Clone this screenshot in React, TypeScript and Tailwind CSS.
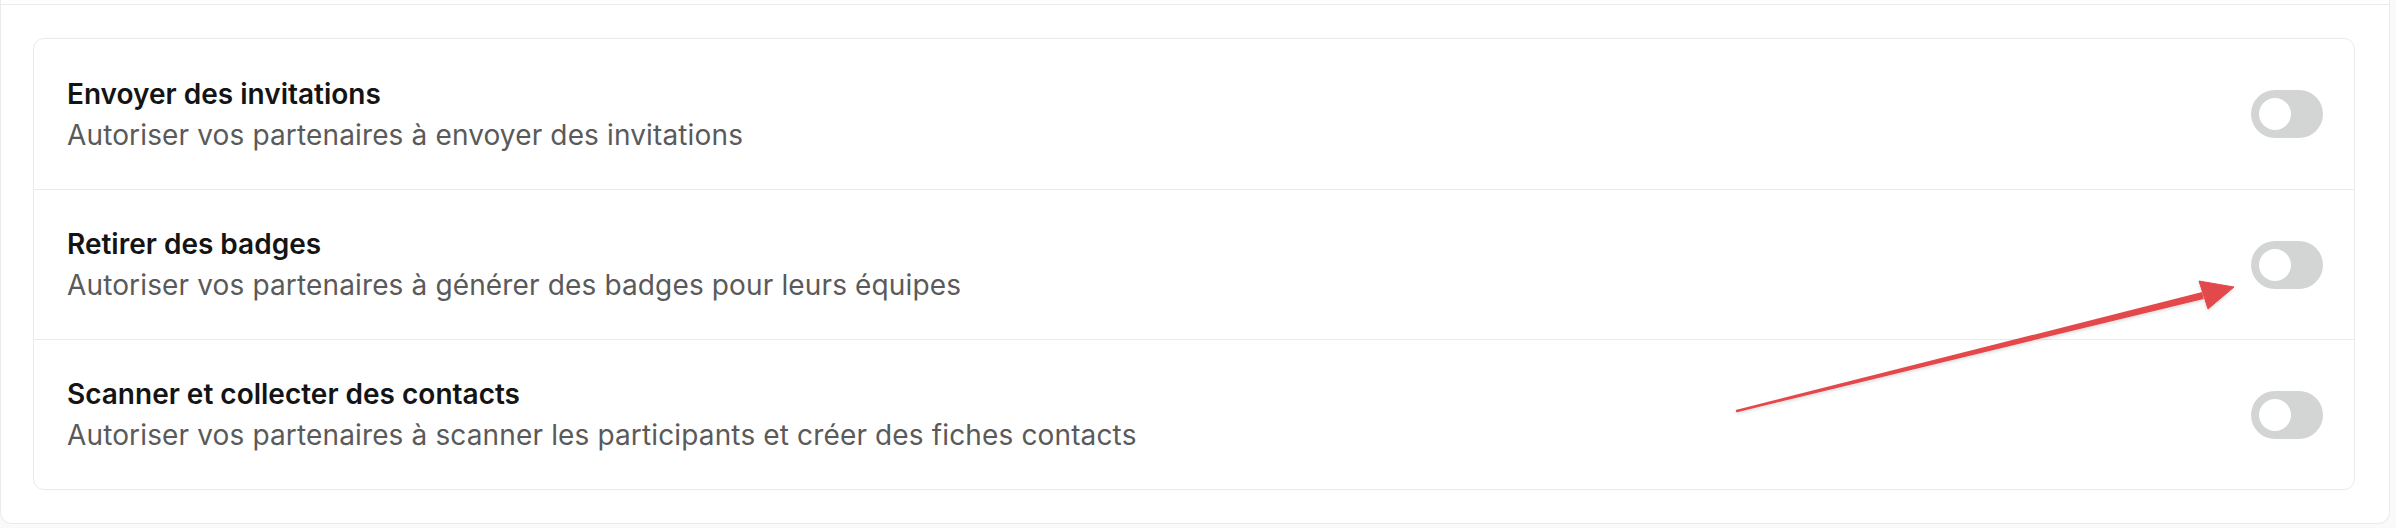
import React from "react";

const rows = [
  {
    title: "Envoyer des invitations",
    desc: "Autoriser vos partenaires à envoyer des invitations",
  },
  {
    title: "Retirer des badges",
    desc: "Autoriser vos partenaires à générer des badges pour leurs équipes",
  },
  {
    title: "Scanner et collecter des contacts",
    desc: "Autoriser vos partenaires à scanner les participants et créer des fiches contacts",
  },
];

function Toggle() {
  return (
    <div className="flex h-[48px] w-[72px] shrink-0 items-center rounded-full bg-[#d3d5d5] px-[8px]">
      <div className="h-[32px] w-[32px] rounded-full bg-white" />
    </div>
  );
}

export default function App() {
  return (
    <div
      className="relative h-[528px] w-[2396px] overflow-hidden bg-[#fafafa]"
      style={{ fontFamily: "Inter, 'Noto Sans', sans-serif" }}
    >
      <div className="w-[2390px] rounded-b-[12px] border-x border-b border-[#ebebeb] bg-white">
        <div className="h-[5px] border-b border-[#ebebeb]" />
        <div className="pb-[33px] pl-[32px] pr-[34px] pt-[33px]">
          <div className="overflow-hidden rounded-[11px] border border-[#ebebeb] bg-white">
            {rows.map((r, i) => (
              <div
                key={r.title}
                className={
                  "flex h-[150px] items-center justify-between pl-[33px] pr-[31px] " +
                  (i > 0 ? "border-t border-[#ebebeb]" : "")
                }
              >
                <div className="flex flex-col gap-[7px]">
                  <div className="text-[28px] font-semibold leading-[34px] tracking-[0em] text-[#141414]">
                    {r.title}
                  </div>
                  <div className="text-[28px] font-normal leading-[34px] tracking-[0.005em] text-[#5a5a5a]">
                    {r.desc}
                  </div>
                </div>
                <Toggle />
              </div>
            ))}
          </div>
        </div>
      </div>

      <svg
        className="pointer-events-none absolute left-0 top-0"
        width="2396"
        height="528"
        viewBox="0 0 2396 528"
      >
        <defs>
          <filter id="sh" x="-10%" y="-10%" width="120%" height="140%">
            <feDropShadow dx="0" dy="2" stdDeviation="1.5" floodColor="#000" floodOpacity="0.12" />
          </filter>
        </defs>
        <g fill="#e3484c" filter="url(#sh)">
          <polygon points="1736.7,409.8 2202.2,292.1 2203.8,298.9 1737.3,412.2" />
          <circle cx="1737" cy="411" r="1.25" />
          <polygon points="2199,281 2234,287 2208,309" strokeLinejoin="round" stroke="#e3484c" strokeWidth="1" />
        </g>
      </svg>
    </div>
  );
}
